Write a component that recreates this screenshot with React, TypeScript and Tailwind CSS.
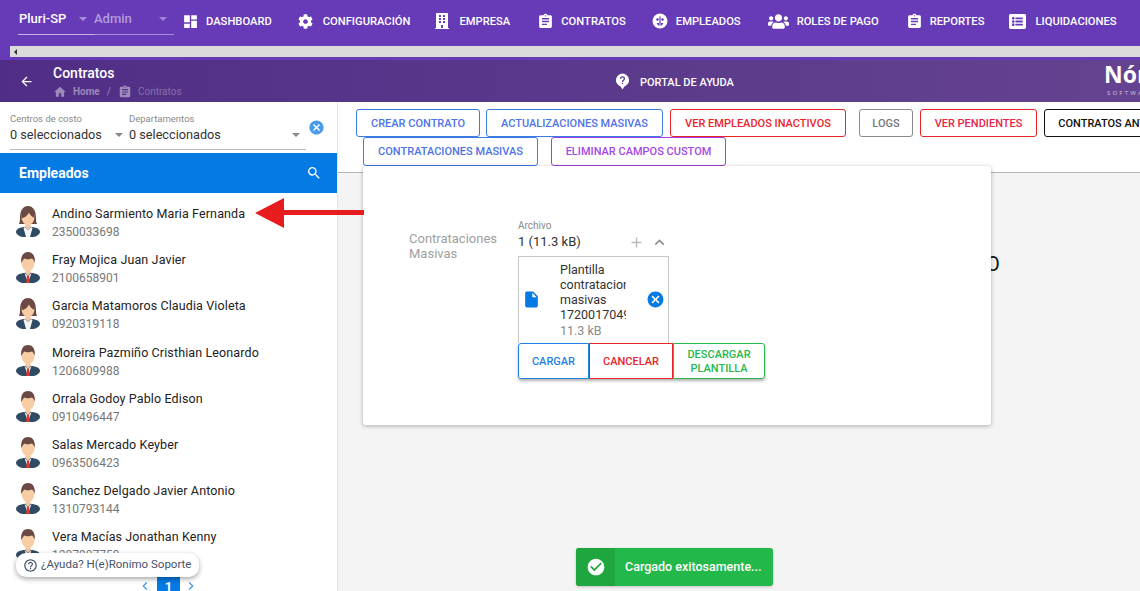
import { FaBuilding, FaCog, FaListAlt, FaUsers } from 'react-icons/fa';
import {
  MdAdd,
  MdArrowBack,
  MdAssignment,
  MdCancel,
  MdCheckCircle,
  MdChevronLeft,
  MdChevronRight,
  MdDashboard,
  MdExpandLess,
  MdHelpOutline,
  MdHome,
  MdInsertDriveFile,
  MdSearch,
} from 'react-icons/md';

const FaceIcon = () => (
  <svg viewBox="0 0 16 16" className="w-[16px] h-[16px]">
    <circle cx="8" cy="8" r="7.500" fill="#fff" />
    <circle cx="5.500" cy="6.500" r="1.300" fill="#673ab7" />
    <circle cx="10.500" cy="6.500" r="1.300" fill="#673ab7" />
    <path d="M7.400 3.500h1.200v9H7.400z" fill="#673ab7" />
    <path d="M4.800 10h2.200v2.600c-1 0-1.800-1.100-2.200-2.600z" fill="#673ab7" />
    <path d="M9 10h2.200C10.800 11.500 10 12.600 9 12.600z" fill="#673ab7" />
  </svg>
);

const HelpBubble = () => (
  <svg viewBox="0 0 16 18" className="w-[15px] h-[17px] shrink-0">
    <path d="M8 0.500a7 7 0 0 1 2 13.700L8 17.500l-2-3.300A7 7 0 0 1 8 0.500z" fill="#fff" />
    <path
      d="M5.300 6a2.700 2.700 0 0 1 5.400 0c0 1.800-2 2-2 3.600H7.300c0-2.300 2-2.400 2-3.600a1.300 1.300 0 0 0-2.600 0z"
      fill="#5a3a8c"
    />
    <path d="M7.300 10.400h1.400v1.400H7.300z" fill="#5a3a8c" />
  </svg>
);

const navItems = [
  { label: 'DASHBOARD', icon: <MdDashboard className="w-[17px] h-[17px]" />, box: 'w-[24px]', next: 'mr-[26px]' },
  { label: 'CONFIGURACIÓN', icon: <FaCog className="w-[15px] h-[15px]" />, box: 'w-[25px]', next: 'mr-[25px]' },
  { label: 'EMPRESA', icon: <FaBuilding className="w-[14px] h-[16px]" />, box: 'w-[24px]', next: 'mr-[27px]' },
  { label: 'CONTRATOS', icon: <MdAssignment className="w-[17px] h-[17px]" />, box: 'w-[24px]', next: 'mr-[26px]' },
  { label: 'EMPLEADOS', icon: <FaceIcon />, box: 'w-[24px]', next: 'mr-[27px]' },
  { label: 'ROLES DE PAGO', icon: <FaUsers className="w-[21px] h-[17px]" />, box: 'w-[29px]', next: 'mr-[27px]' },
  { label: 'REPORTES', icon: <MdAssignment className="w-[17px] h-[17px]" />, box: 'w-[24px]', next: 'mr-[25px]' },
  { label: 'LIQUIDACIONES', icon: <FaListAlt className="w-[17px] h-[17px]" />, box: 'w-[26px]', next: '' },
];

const employees = [
  { name: 'Andino Sarmiento Maria Fernanda', id: '2350033698', female: true },
  { name: 'Fray Mojica Juan Javier', id: '2100658901', female: false },
  { name: 'Garcia Matamoros Claudia Violeta', id: '0920319118', female: true },
  { name: 'Moreira Pazmiño Cristhian Leonardo', id: '1206809988', female: false },
  { name: 'Orrala Godoy Pablo Edison', id: '0910496447', female: false },
  { name: 'Salas Mercado Keyber', id: '0963506423', female: false },
  { name: 'Sanchez Delgado Javier Antonio', id: '1310793144', female: false },
  { name: 'Vera Macías Jonathan Kenny', id: '1207907750', female: false },
];

const Avatar = ({ female }: { female: boolean }) => (
  <svg viewBox="0 0 24 32" className="w-[24px] h-[32px] shrink-0">
    {female && <path d="M4 13C4 4 8 1 12 1s8 3 8 12c0 3 .5 5 1 6H3c.5-1 1-3 1-6z" fill="#6b4a45" />}
    <ellipse cx="12" cy="27" rx="12" ry="5.500" fill="#2f4a63" />
    <path d="M9.500 17h5v5l-2.500 3-2.500-3z" fill="#f5c9a0" />
    {female ? (
      <path d="M9 22l3 3 3-3 1.500 1-2.500 9h-4l-2.500-9z" fill="#f4f4f4" />
    ) : (
      <>
        <path d="M8.500 22L12 32l3.500-10-3.500 3z" fill="#f4f4f4" />
        <path d="M11 24.500h2l.800 7.500h-3.600z" fill="#e2352d" />
      </>
    )}
    <ellipse cx="12" cy="12" rx="6.500" ry="8" fill="#f8cda6" />
    {female ? (
      <path d="M5.500 13c3 0 6-2 7.500-5.500 1 2.500 3 4.500 5.500 5.500C19 6 16 3 12 3S5 6 5.500 13z" fill="#6b4a45" />
    ) : (
      <path d="M5.200 12C4.500 4 8 1 12 1s7.500 3 6.800 11c-.5-2-1.500-3.500-3-4.500-2 1-6 1-7.500 0-1 1-2.100 2.500-3.100 4.500z" fill="#6b4a45" />
    )}
  </svg>
);

const ToolButton = ({ label, color, className }: { label: string; color: string; className: string }) => (
  <button className={`rounded-[3px] border bg-white text-[11px] font-medium shrink-0 whitespace-nowrap pt-[2px] ${color} ${className}`}>
    {label}
  </button>
);

const App = () => {
  return (
    <div className="w-[1140px] h-[591px] overflow-hidden relative bg-white font-['Roboto',sans-serif]">
      {/* top nav */}
      <div className="h-[60px] bg-[#673ab7]">
        <div className="h-[46px] flex items-start text-white">
          <div className="w-[156px] ml-[18px] mr-[8px] h-[35px] flex items-start pt-[10px] border-b border-b-[#ffffff70] relative">
            <span className="absolute left-0 bottom-[-1px] w-[77px] h-px bg-[#ffffff50]" />
            <span className="ml-[1px] w-[60px] text-[13px] font-medium leading-[18px]">Pluri-SP</span>
            <span className="w-0 h-0 mt-[7px] border-x-[4px] border-x-transparent border-t-[4px] border-t-[#ffffff70]" />
            <span className="ml-[7px] w-[65px] text-[13px] font-medium leading-[18px] text-[#ffffff80]">Admin</span>
            <span className="w-0 h-0 mt-[7px] border-x-[4px] border-x-transparent border-t-[4px] border-t-[#ffffff60]" />
          </div>
          {navItems.map((item) => (
            <div key={item.label} className={`flex items-center h-[20px] mt-[11px] shrink-0 ${item.next}`}>
              <span className={`flex items-center ${item.box}`}>{item.icon}</span>
              <span className="text-[11.2px] font-medium whitespace-nowrap mt-[3px]">{item.label}</span>
            </div>
          ))}
        </div>
        <div className="ml-[10px] h-[11px] bg-[#dcdbdc] flex items-center pl-[4px]">
          <span className="w-0 h-0 border-y-[3px] border-y-transparent border-r-[3px] border-r-[#333]" />
        </div>
      </div>

      {/* page header */}
      <div className="h-[42px] flex items-center overflow-hidden text-white bg-gradient-to-r from-[#502e86] to-[#654391]">
        <MdArrowBack className="ml-[19px] w-[15px] h-[15px] shrink-0" />
        <div className="ml-[19px] w-[500px] shrink-0">
          <div className="text-[14px] font-medium leading-[17px] mt-[1px]">Contratos</div>
          <div className="flex items-center text-[10px] leading-[14px] mt-[3px] text-[#ffffff70]">
            <MdHome className="w-[14px] h-[14px] mr-[6px]" />
            <span className="font-bold">Home</span>
            <span className="mx-[7px]">/</span>
            <MdAssignment className="w-[14px] h-[14px] mr-[6px]" />
            <span className="text-[#ffffff50]">Contratos</span>
          </div>
        </div>
        <span className="ml-[62px] mt-[1px] flex items-center shrink-0">
          <HelpBubble />
        </span>
        <span className="ml-[10px] mt-[4px] w-[465px] shrink-0 text-[11px] font-medium">PORTAL DE AYUDA</span>
        <div className="shrink-0 font-['Open_Sans',sans-serif] leading-none -mt-[4px] -ml-[1px]">
          <div className="text-[23px] font-bold leading-[22px] mb-[5px]">Nómina</div>
          <div className="text-[6px] tracking-[2.200px] text-[#ffffffb0] ml-[3px]">SOFTWARE</div>
        </div>
      </div>

      <div className="flex h-[489px]">
        {/* sidebar */}
        <aside className="w-[338px] shrink-0 border-r border-r-[#e4e4e4] flex flex-col relative">
          <div className="h-[51px] pl-[10px] pt-[10px] relative">
            <div className="w-[296px] h-[38px] border-b border-b-[#bbb] flex">
              <div className="w-[119px] shrink-0">
                <div className="text-[9.500px] leading-[12px] mt-[1px] text-[#8a8a8a]">Centros de costo</div>
                <div className="flex items-center mt-[1px] text-[12.7px] leading-[18px] text-[#333]">
                  <span className="w-[105px]">0 seleccionados</span>
                  <span className="w-0 h-0 border-x-[4px] border-x-transparent border-t-[4px] border-t-[#888]" />
                </div>
              </div>
              <div className="flex-1">
                <div className="text-[9.500px] leading-[12px] mt-[1px] text-[#8a8a8a]">Departamentos</div>
                <div className="flex items-center justify-between mt-[1px] text-[12.7px] leading-[18px] text-[#333]">
                  <span>0 seleccionados</span>
                  <span className="w-0 h-0 border-x-[4px] border-x-transparent border-t-[4px] border-t-[#888] mr-[6px]" />
                </div>
              </div>
            </div>
            <MdCancel className="absolute left-[308px] top-[17px] w-[17px] h-[17px] text-[#4a9be8]" />
          </div>
          <div className="h-[40px] bg-[#037ae4] flex items-center justify-between pl-[19px] pr-[15px] text-white">
            <span className="text-[14px] font-bold">Empleados</span>
            <MdSearch className="w-[16px] h-[16px]" />
          </div>
          <div className="flex-1 overflow-hidden pt-[12px]">
            {employees.map((e) => (
              <div key={e.id} className="h-[46.2px] flex items-start pl-[16px]">
                <Avatar female={e.female} />
                <div className="ml-[12px]">
                  <div className="text-[12.5px] leading-[18px] text-[#222] tracking-[0.12px] whitespace-nowrap">{e.name}</div>
                  <div className="text-[12px] leading-[18px] text-[#777]">{e.id}</div>
                </div>
              </div>
            ))}
          </div>
          <div className="absolute left-[137px] top-[475px] flex items-start text-[#4a9be8]">
            <MdChevronLeft className="w-[16px] h-[16px] mt-[1px] mr-[4px]" />
            <span className="w-[23px] h-[20px] bg-[#037ae4] text-white text-[13px] font-bold text-center leading-[20px]">1</span>
            <MdChevronRight className="w-[16px] h-[16px] mt-[1px] ml-[3px]" />
          </div>
          <div className="absolute left-[16px] top-[451px] w-[183px] h-[24px] rounded-[10px] bg-white shadow-[0_2px_5px_rgba(0,0,0,0.35)] flex items-center pl-[7px] text-[#47536b]">
            <MdHelpOutline className="w-[15px] h-[15px] mr-[3px]" />
            <span className="text-[11.5px] whitespace-nowrap">¿Ayuda? H(e)Ronimo Soporte</span>
          </div>
        </aside>

        {/* main */}
        <main className="flex-1 min-w-0 overflow-hidden flex flex-col">
          <div className="h-[71px] shrink-0 pt-[7px] border-b border-b-[#b5b5b5]">
            <div className="flex pl-[18px]">
              <ToolButton label="CREAR CONTRATO" color="border-[#3b7be4] text-[#4f73e8]" className="w-[124px] h-[28px]" />
              <ToolButton label="ACTUALIZACIONES MASIVAS" color="border-[#3b7be4] text-[#4f73e8]" className="w-[177px] h-[28px] ml-[6px]" />
              <ToolButton label="VER EMPLEADOS INACTIVOS" color="border-[#e8262a] text-[#e8262a]" className="w-[176px] h-[28px] ml-[7px]" />
              <ToolButton label="LOGS" color="border-[#8a8a8a] text-[#777]" className="w-[54px] h-[28px] ml-[13px]" />
              <ToolButton label="VER PENDIENTES" color="border-[#e8262a] text-[#e8264a]" className="w-[117px] h-[28px] ml-[7px]" />
              <ToolButton label="CONTRATOS ANTERIORES" color="border-[#111] text-[#111]" className="w-[160px] h-[28px] ml-[7px]" />
            </div>
            <div className="flex pl-[25px]">
              <ToolButton label="CONTRATACIONES MASIVAS" color="border-[#3b7be4] text-[#4f73e8]" className="w-[175px] h-[29px]" />
              <ToolButton label="ELIMINAR CAMPOS CUSTOM" color="border-[#a040e0] text-[#a548e4]" className="w-[175px] h-[29px] ml-[13px]" />
            </div>
          </div>

          <div className="flex-1 bg-[#f4f4f4] pl-[25px] relative">
            <span className="absolute left-[648px] top-[76px] text-[20px] leading-[30px] text-[#111]">O</span>
            <div className="relative -mt-[7px] w-[628px] h-[259px] bg-white rounded-[3px] shadow-[0_1px_4px_rgba(0,0,0,0.3)] flex pt-[53px] pl-[47px]">
              <div className="w-[108px] shrink-0 text-[13px] leading-[15px] text-[#a0a0a0] pt-[12px] -ml-[1px] mr-[1px]">
                Contrataciones
                <br />
                Masivas
              </div>
              <div className="w-[151px] shrink-0">
                <div className="text-[10px] leading-[12px] text-[#8a8a8a] mt-[1px]">Archivo</div>
                <div className="h-[22px] flex items-center text-[13px] text-[#333] -mt-[1px]">
                  <span className="flex-1">1 (11.3 kB)</span>
                  <MdAdd className="w-[17px] h-[17px] text-[#bbb] mr-[5px]" />
                  <MdExpandLess className="w-[19px] h-[19px] text-[#888]" />
                </div>
                <div className="h-[87px] mt-[3px] border border-[#c8c8c8] border-b-0 flex items-center">
                  <MdInsertDriveFile className="ml-[3px] w-[19px] h-[19px] text-[#037ae4] shrink-0 -mt-[2px]" />
                  <div className="ml-[19px] w-[66px] overflow-hidden shrink-0 text-[12.5px] leading-[15px] text-[#333] whitespace-nowrap -mt-[1px]">
                    <div>Plantilla</div>
                    <div>contrataciones</div>
                    <div>masivas</div>
                    <div>1720017049</div>
                    <div className="text-[#8a8a8a] mt-[1px]">11.3 kB</div>
                  </div>
                  <MdCancel className="ml-[20px] w-[19px] h-[19px] text-[#037ae4] shrink-0 -mt-[2px]" />
                </div>
                <div className="flex w-[247px] h-[36px] rounded-[3px] shadow-[0_2px_3px_rgba(0,0,0,0.3)] text-[11px] font-medium">
                  <button className="w-[71px] shrink-0 border border-[#1f80e8] rounded-l-[3px] text-[#1f80e8] pt-[2px]">CARGAR</button>
                  <button className="w-[84px] shrink-0 border border-[#e8262a] text-[#e8262a] pt-[2px]">CANCELAR</button>
                  <button className="w-[92px] shrink-0 border border-[#25b84c] rounded-r-[3px] text-[#25b84c] leading-[14px] pt-[2px]">
                    DESCARGAR PLANTILLA
                  </button>
                </div>
              </div>
            </div>
          </div>
        </main>
      </div>

      {/* red arrow over the list */}
      <svg className="absolute left-[250px] top-[195px] w-[118px] h-[36px]" viewBox="0 0 118 36">
        <path d="M5 18L34 3v12h80v5H34v13z" fill="#e81c1f" />
      </svg>

      {/* toast */}
      <div className="absolute left-[576px] top-[548px] w-[197px] h-[38px] rounded-[3px] bg-[#22b84a] flex items-center text-white shadow-[0_1px_3px_rgba(0,0,0,0.2)]">
        <div className="w-[39px] h-full bg-[#1fa63f] rounded-l-[3px] flex items-center justify-center">
          <MdCheckCircle className="w-[20px] h-[20px]" />
        </div>
        <span className="ml-[10px] text-[12.5px] font-medium whitespace-nowrap">Cargado exitosamente...</span>
      </div>
    </div>
  );
};

export default App;
